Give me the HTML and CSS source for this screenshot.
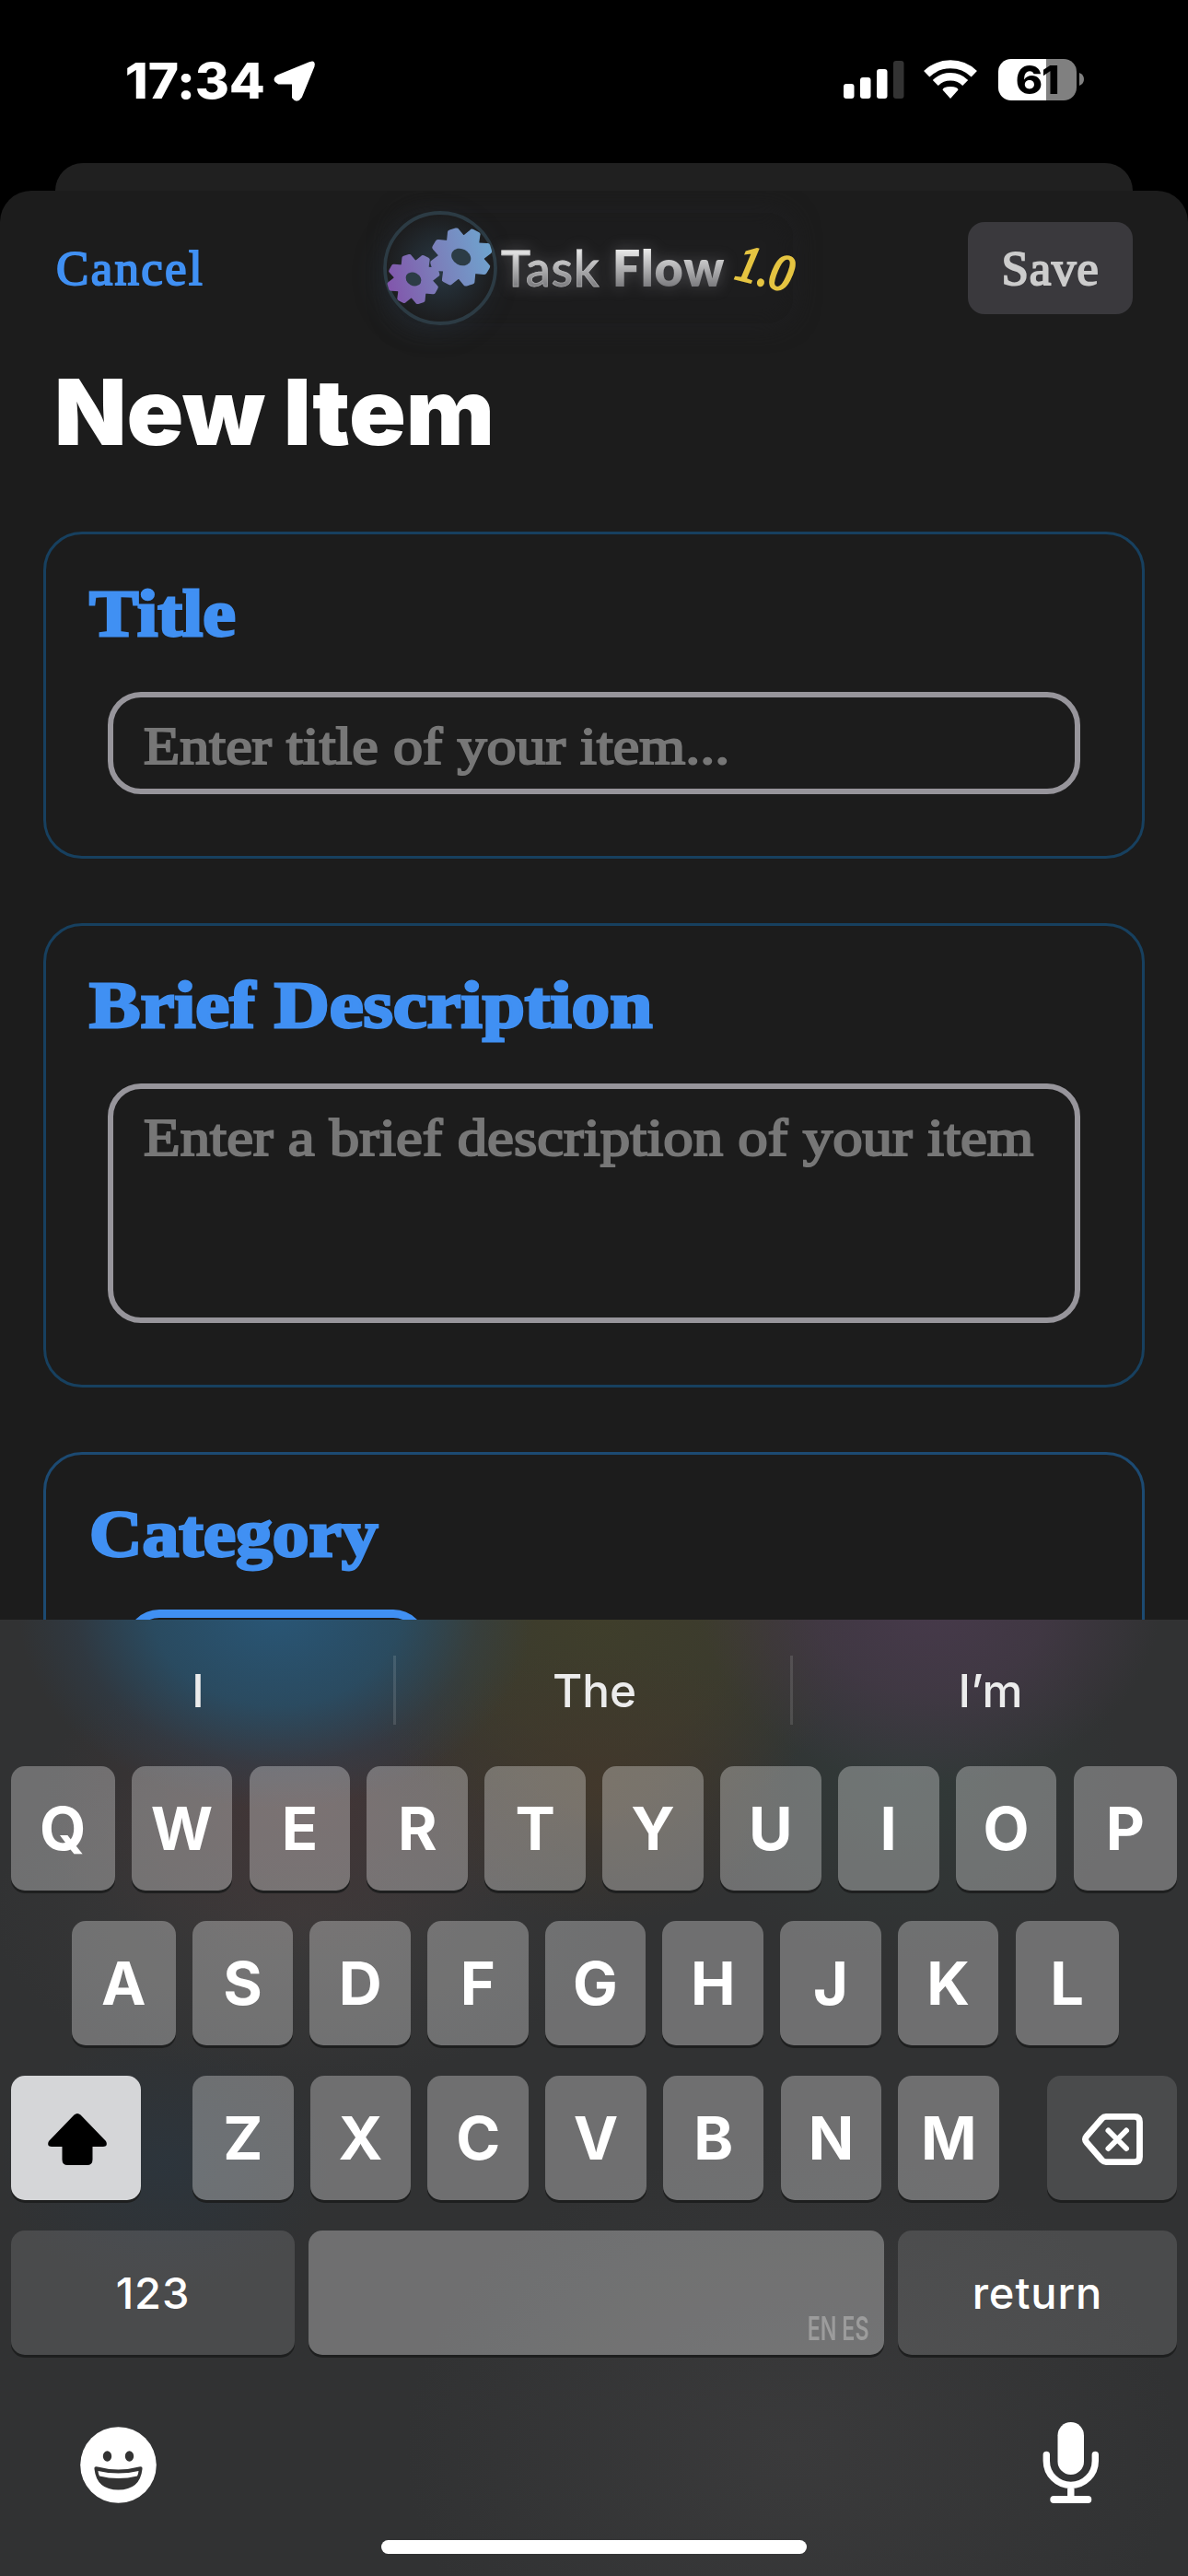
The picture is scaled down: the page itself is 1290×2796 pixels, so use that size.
FILE: index.html
```html
<!DOCTYPE html>
<html lang="en">
<head>
<meta charset="utf-8">
<title>New Item</title>
<link rel="stylesheet" href="styles.css">
</head>
<body>
<div class="screen">
  <header class="status">
    <div class="status-left">
      <span class="clock">17:34</span>
      <svg class="loc" viewBox="0 0 46 46"><path d="M40 3.500 Q44.500 1.500 43 7 L29.500 40 Q25.500 46 21.500 40.500 L21.500 26.500 Q21.500 25 20 25 L6 25 Q-1 22 4.500 18 Z" fill="#fff" stroke="#fff" stroke-width="3" stroke-linejoin="round"/></svg>
    </div>
    <div class="status-right">
      <svg class="signal" viewBox="0 0 66 42" fill="#fff"><rect x="0" y="25" width="11.500" height="16" rx="3"/><rect x="18" y="18" width="11.500" height="23" rx="3"/><rect x="36" y="9" width="11.500" height="32" rx="3"/><rect x="54" y="0" width="11.500" height="41" rx="3" fill="#333"/></svg>
      <svg class="wifi" viewBox="0 0 60 44" fill="none" stroke="#fff"><path d="M4.200 16.200 A37.300 37.300 0 0 1 55.800 16.200" stroke-width="9"/><path d="M13.800 26 A23 23 0 0 1 46.200 26" stroke-width="8.500"/><path d="M30 43 L21.500 33.500 Q22 30 30 30 Q38 30 38.500 33.500 Z" fill="#fff" stroke="none"/></svg>
      <div class="battery"><span>61</span></div>
      <svg class="nub" viewBox="0 0 5 14"><path d="M0 0 Q5 2 5 7 Q5 12 0 14Z" fill="#808080"/></svg>
    </div>
  </header>
  <div class="back-sheet"></div>
  <main class="sheet">
    <nav class="nav">
      <button class="cancel">Cancel</button>
      <div class="brand">
        <div class="brand-plate"></div>
        <svg class="gears" viewBox="0 0 124 124">
          <defs>
            <radialGradient id="halo"><stop offset="0" stop-color="#2a3a45"/><stop offset=".45" stop-color="#232c33"/><stop offset="1" stop-color="#1c1c1d"/></radialGradient>
            <linearGradient id="tint" x1="0" y1=".6" x2="1" y2=".4"><stop offset="0" stop-color="#8254ab"/><stop offset=".48" stop-color="#7b7fba"/><stop offset="1" stop-color="#6ea6d0"/></linearGradient>
            <path id="tooth" d="M-30 -66 L-19 -94 Q-18 -101 -10 -101 L10 -101 Q18 -101 19 -94 L30 -66Z"/>
            <g id="gear" fill="#fff"><circle r="75"/><use href="#tooth"/><use href="#tooth" transform="rotate(45)"/><use href="#tooth" transform="rotate(90)"/><use href="#tooth" transform="rotate(135)"/><use href="#tooth" transform="rotate(180)"/><use href="#tooth" transform="rotate(225)"/><use href="#tooth" transform="rotate(270)"/><use href="#tooth" transform="rotate(315)"/></g>
            <mask id="pair"><use href="#gear" transform="translate(84.700 50) rotate(-17) scale(.335 .315)"/><use href="#gear" transform="translate(33 74) rotate(-17) scale(.285 .27)"/></mask>
          </defs>
          <circle cx="62" cy="62" r="60" fill="url(#halo)" stroke="#2c3b44" stroke-width="3.800"/>
          <rect x="0" y="16" width="124" height="90" fill="url(#tint)" mask="url(#pair)"/>
          <ellipse cx="84.700" cy="50" rx="11" ry="8.800" fill="#2c3c46" transform="rotate(28 84.700 50)"/>
          <ellipse cx="33" cy="74" rx="8.800" ry="7" fill="#2c3c46" transform="rotate(28 33 74)"/>
        </svg>
        <span class="brand-name"><span class="task">Task</span> <span class="flow">Flow</span></span>
        <span class="version">1.0</span>
      </div>
      <button class="save">Save</button>
    </nav>
    <h1 class="title">New Item</h1>
    <section class="card">
      <h2>Title</h2>
      <div class="field"><span>Enter title of your item...</span></div>
    </section>
    <section class="card">
      <h2 class="wide">Brief Description</h2>
      <div class="field tall"><span>Enter a brief description of your item</span></div>
    </section>
    <section class="card category">
      <h2>Category</h2>
      <div class="chip"></div>
    </section>
  </main>
  <footer class="keyboard">
    <div class="suggestions"><span>I</span><span>The</span><span>I’m</span></div>
    <div class="keys">
      <div class="row r1"><b class="end">Q</b><b>W</b><b>E</b><b>R</b><b>T</b><b>Y</b><b>U</b><b>I</b><b>O</b><b class="end">P</b></div>
      <div class="row r2"><b class="end">A</b><b>S</b><b>D</b><b>F</b><b>G</b><b>H</b><b>J</b><b>K</b><b class="end">L</b></div>
      <div class="row r3">
        <b class="shift"><svg viewBox="0 0 66 58"><path d="M29.500 2.500 Q33 -.5 36.500 2.500 L64 31 Q67 36.500 61 37 L49.500 37 L49.500 51 Q49.500 57 43.500 57 L22.500 57 Q16.500 57 16.500 51 L16.500 37 L5 37 Q-1 36.500 2 31 Z" fill="#000"/></svg></b>
        <div class="letters"><b>Z</b><b>X</b><b>C</b><b>V</b><b>B</b><b>N</b><b>M</b></div>
        <b class="fn del"><svg viewBox="0 0 66 56" fill="none" stroke="#fff" stroke-width="6.800" stroke-linejoin="round" stroke-linecap="round"><path d="M26 3.400 H57 Q62.500 3.400 62.500 9 V47 Q62.500 52.600 57 52.600 H26 Q23.500 52.600 21.500 50.500 L5 31.500 Q2 28 5 24.500 L21.500 5.500 Q23.500 3.400 26 3.400Z"/><path d="M28.500 18.500 L48 38 M48 18.500 L28.500 38" stroke-width="6"/></svg></b>
      </div>
      <div class="row r4"><b class="fn num">123</b><b class="space"><i>EN ES</i></b><b class="fn ret">return</b></div>
    </div>
    <div class="dock">
      <svg class="emoji" viewBox="0 0 83 83"><circle cx="41.500" cy="41.500" r="41.300" fill="#fff"/><g fill="#333"><ellipse cx="29.500" cy="32" rx="4.700" ry="5.800"/><ellipse cx="53.500" cy="32" rx="4.700" ry="5.800"/><path d="M15.500 46 Q15 42.500 19 43.500 Q41.500 49.500 64 43.500 Q68 42.500 67.500 46 Q65 68.500 41.500 68.500 Q18 68.500 15.500 46Z"/></g><path d="M19.500 48 Q41.500 53 63.500 48 Q63.300 51 62 53.500 Q41.500 58.500 21 53.500 Q19.700 51 19.500 48Z" fill="#fff"/></svg>
      <svg class="mic" viewBox="0 0 62 90"><rect x="16.500" y="1" width="28.500" height="57" rx="14.250" fill="#fff"/><path d="M4.300 36.500 V43 A26.500 26.500 0 0 0 57.300 43 V36.500 M30.800 71 V84" fill="none" stroke="#fff" stroke-width="7.400" stroke-linecap="round"/><rect x="8.300" y="81" width="45" height="8" rx="4" fill="#fff"/></svg>
    </div>
    <div class="home"></div>
  </footer>
</div>
</body>
</html>
```
FILE: styles.css
```css
* { box-sizing: border-box; }
body { margin: 0; background: #000; }
button { border: 0; padding: 0; background: none; margin: 0; }
svg { display: block; overflow: visible; flex: none; }

.screen {
  width: 1290px;
  height: 2796px;
  overflow: hidden;
  display: flex;
  flex-direction: column;
  font-family: Inter, "Liberation Sans", sans-serif;
  color: #fff;
}

/* Status bar */
.status {
  height: 177px;
  flex: none;
  display: flex;
  justify-content: space-between;
  padding: 0 113px 0 136px;
}
.status-left { display: flex; padding-top: 56px; }
.clock {
  font-size: 53px;
  line-height: 64px;
  font-weight: 780;
  letter-spacing: -.2px;
  width: 161px;
  white-space: nowrap;
  transform: scaleX(1.07);
  transform-origin: 2px 50%;
}
.loc { width: 46px; height: 46px; margin-top: 9px; }
.status-right { display: flex; padding-top: 64px; }
.signal { width: 66px; height: 42px; margin-top: 2px; }
.wifi { width: 60px; height: 44px; margin: 0 22px 0 20.500px; }
.battery {
  width: 85px;
  height: 45px;
  border-radius: 14px;
  background: linear-gradient(90deg, #fff 0 52px, #808080 52px);
  color: #000;
  font-size: 42px;
  line-height: 45px;
  font-weight: 800;
  letter-spacing: -1px;
  text-align: center;
}
.battery span { display: inline-block; transform: scaleX(1.06); }
.nub { width: 5px; height: 14px; margin: 15px 0 0 3px; }

/* Sheets */
.back-sheet { height: 30px; flex: none; margin: 0 60px; background: #202020; border-radius: 30px 30px 0 0; }
.sheet {
  flex: 1;
  min-height: 0;
  overflow: hidden;
  background: #1c1c1c;
  border-radius: 34px 34px 0 0;
  padding: 22px 47px 0;
}
.nav {
  height: 124px;
  margin: 0 13px;
  display: grid;
  grid-template-columns: 356px 450px 1fr;
  align-items: center;
}
.cancel, .save {
  font: 400 53px/60px "Liberation Serif", serif;
  -webkit-text-stroke: 1.900px currentColor;
  letter-spacing: 2.300px;
}
.cancel { color: #4090f3; justify-self: start; padding-left: 1px; }
.save {
  justify-self: end;
  width: 179px;
  height: 100px;
  border-radius: 18px;
  background: #3a393d;
  color: #ccc;
  letter-spacing: .8px;
}

/* Brand logo */
.brand { position: relative; height: 124px; display: flex; align-items: center; }
.brand-plate {
  position: absolute;
  left: 14px;
  top: 2px;
  width: 431px;
  height: 120px;
  border-radius: 28px;
  background: #1d1d1e;
  box-shadow: 0 0 28px #202023, inset 0 0 24px #1b1b1b;
}
.gears { position: relative; width: 124px; height: 124px; border-radius: 50%; box-shadow: -6px 8px 28px rgba(42, 60, 75, .3); }
.brand-name {
  position: relative;
  margin-left: 4px;
  font: 600 54px/64px Lato, sans-serif;
  white-space: nowrap;
  background: linear-gradient(#e8e8e8 12px, #7b7b7e 52px);
  -webkit-background-clip: text;
  background-clip: text;
  color: transparent;
  filter: drop-shadow(0 0 8px rgba(190, 190, 200, .3));
}
.task { font-weight: 500; -webkit-text-stroke: .8px rgba(190, 190, 192, .6); letter-spacing: .8px; }
.flow { font-weight: 800; letter-spacing: .8px; }
.version {
  position: absolute;
  left: 380px;
  top: 32px;
  font: italic 400 56px/60px "Liberation Serif", serif;
  -webkit-text-stroke: 2.400px #e5c441;
  color: #e5c441;
  transform: rotate(14deg) scaleX(.88);
}

.title {
  margin: 34px 0 70px 12px;
  font-size: 99px;
  line-height: 120px;
  font-weight: 900;
  white-space: nowrap;
  transform: scaleX(1.03);
  transform-origin: left;
}

/* Form cards */
.card {
  border: 3px solid #17405f;
  border-radius: 42px;
  height: 355px;
  padding: 46px 67px 67px;
  margin-bottom: 70px;
}
.card:nth-of-type(2) { height: 504px; }
.card.category { border-color: #1c4a72; }
.card h2 {
  margin: 0 0 45px -20px;
  font: 700 71px/80px "Liberation Serif", serif;
  -webkit-text-stroke: 2.800px currentColor;
  color: #4090f3;
  transform: scaleX(1.13);
  transform-origin: left;
  white-space: nowrap;
}
.card h2.wide { transform: scaleX(1.17); }
.card.category h2 { transform: scaleX(1.12); }
.field {
  height: 111px;
  border: 6px solid #97959b;
  border-radius: 36px;
  padding: 20px 0 0 33px;
}
.field.tall { height: 260px; }
.field span {
  display: block;
  font: 400 57px/66px "Liberation Serif", serif;
  -webkit-text-stroke: 2.100px currentColor;
  color: #777;
  transform: scaleX(1.126);
  transform-origin: left;
  white-space: nowrap;
}
.field.tall span { transform: scaleX(1.139); }
.chip { width: 326px; height: 110px; margin: -3px 0 0 20px; border: 9px solid #4090f3; border-radius: 36px; }

/* Keyboard */
.keyboard {
  height: 1038px;
  flex: none;
  display: flex;
  flex-direction: column;
  background:
    radial-gradient(ellipse 280px 215px at 300px -10px, rgba(41, 86, 118, 1), rgba(40, 80, 106, .82) 48%, rgba(44, 70, 94, .3) 78%, transparent),
    radial-gradient(ellipse 250px 200px at 1010px -20px, rgba(72, 58, 76, .95), rgba(69, 57, 72, .75) 50%, transparent),
    radial-gradient(ellipse 220px 150px at 650px 180px, rgba(67, 56, 43, .9), transparent),
    radial-gradient(ellipse 280px 240px at 650px 0, rgba(63, 62, 43, 1), rgba(62, 61, 44, .8) 55%, transparent),
    radial-gradient(ellipse 290px 170px at 330px 200px, rgba(69, 54, 55, .85), transparent),
    radial-gradient(ellipse 340px 180px at 330px 320px, rgba(62, 60, 60, .8), transparent),
    radial-gradient(ellipse 240px 200px at 980px 170px, rgba(49, 59, 57, .9), transparent),
    radial-gradient(ellipse 180px 140px at 180px 590px, rgba(44, 53, 61, .9), transparent),
    radial-gradient(ellipse 420px 330px at 860px 900px, rgba(59, 59, 60, .9), transparent),
    #313233;
}
.suggestions { height: 159px; flex: none; display: grid; grid-template-columns: 427px 431px 432px; padding-top: 39px; }
.suggestions span {
  height: 75px;
  text-align: center;
  font-size: 49.500px;
  line-height: 76px;
  font-weight: 500;
  color: #ececec;
  border-left: 3px solid rgba(255, 255, 255, .12);
}
.suggestions span:first-child { border-color: transparent; }
.suggestions span:nth-child(2) { padding-left: 3px; }
.keys { display: flex; flex-direction: column; gap: 33px; }
.row { display: flex; gap: 18.200px; height: 135px; }
.r1, .r3, .r4 { padding: 0 12px; }
.r2 { padding: 0 75px 0 78px; }
.r3 { justify-content: space-between; }
.r4 { gap: 15px; }
.letters { display: flex; gap: 18.200px; width: 876px; margin-left: 4px; }
.row b {
  flex: 1;
  display: flex;
  align-items: center;
  justify-content: center;
  font-size: 65px;
  line-height: 135px;
  font-weight: 650;
  border-radius: 15px;
  background: rgba(255, 255, 255, .3);
  box-shadow: 0 3px 0 #1e1f1f;
}
.row b.end { flex: 0 0 112.500px; }
.row b.shift, .row b.del { flex: 0 0 141px; }
.row b.shift { background: #d5d6d8; }
.row b.shift svg { width: 66px; height: 58px; margin-left: 2px; margin-bottom: -2px; }
.row b.del svg { width: 66px; height: 56px; margin-bottom: -3px; }
.row b.fn { background: rgba(255, 255, 255, .125); }
.row b.num, .row b.ret { font-size: 47px; font-weight: 550; letter-spacing: .9px; }
.row b.num { flex: 0 0 308px; }
.row b.ret { flex: 0 0 303px; }
.row b.space { justify-content: flex-end; align-items: flex-end; padding: 0 16px 8px 0; }
.row b.space i {
  font: 600 35px/42px Inter, sans-serif;
  color: #9c9c9c;
  white-space: nowrap;
  transform: scaleX(.665);
  transform-origin: right;
}
.dock { display: flex; justify-content: space-between; padding: 72px 96px 0 87px; height: 201px; flex: none; }
.emoji { width: 83px; height: 83px; margin-top: 6px; }
.mic { width: 62px; height: 90px; }
.home { width: 462px; height: 15px; border-radius: 8px; background: #fff; margin: 0 auto; flex: none; }
```
